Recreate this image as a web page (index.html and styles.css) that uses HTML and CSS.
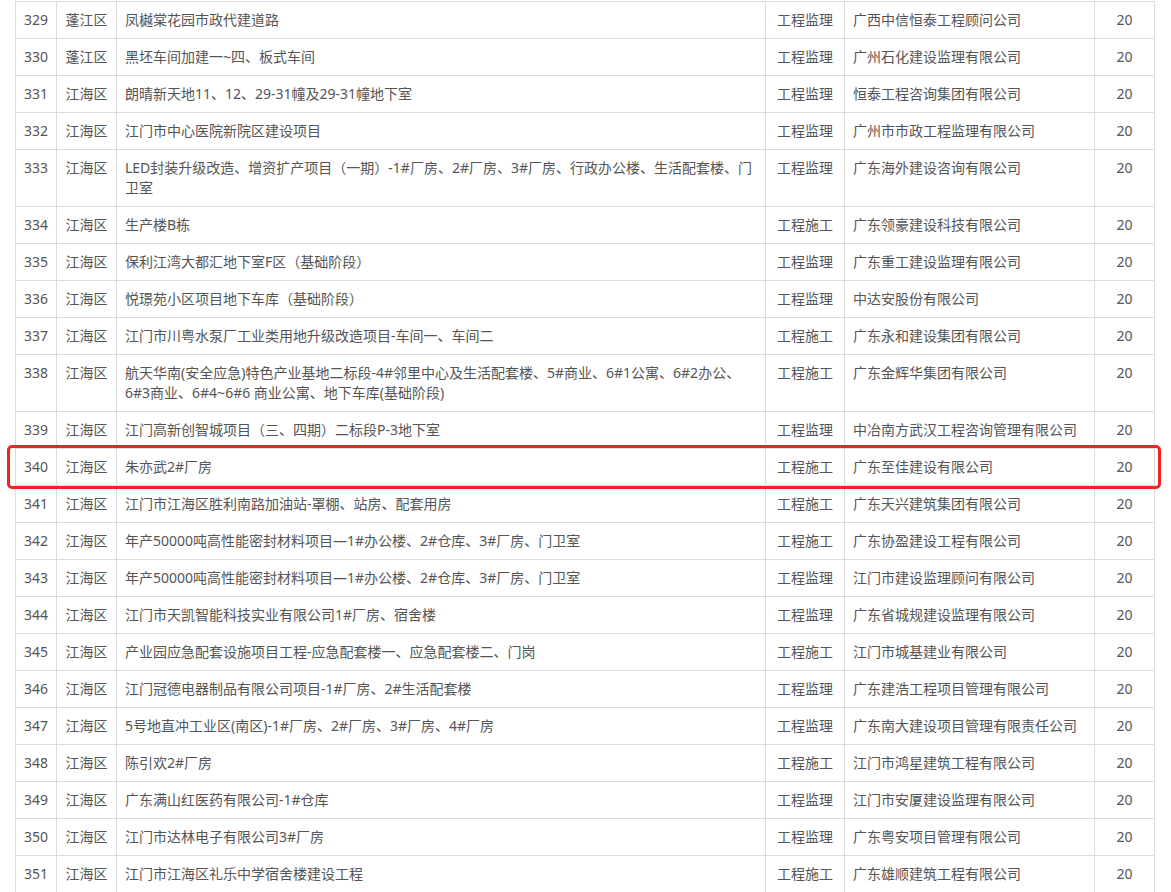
FILE: index.html
```html
<!DOCTYPE html>
<html lang="zh-CN">
<head>
<meta charset="utf-8">
<title>项目列表</title>
<link rel="stylesheet" href="styles.css">
</head>
<body>
<div class="page">
  <table class="list">
    <colgroup>
      <col class="c-no"><col class="c-area"><col class="c-name"><col class="c-type"><col class="c-corp"><col class="c-score">
    </colgroup>
    <tbody>
      <tr><td class="ctr">329</td><td class="ctr">蓬江区</td><td>凤樾棠花园市政代建道路</td><td class="ctr">工程监理</td><td>广西中信恒泰工程顾问公司</td><td class="ctr">20</td></tr>
      <tr><td class="ctr">330</td><td class="ctr">蓬江区</td><td>黑坯车间加建一~四、板式车间</td><td class="ctr">工程监理</td><td>广州石化建设监理有限公司</td><td class="ctr">20</td></tr>
      <tr><td class="ctr">331</td><td class="ctr">江海区</td><td>朗晴新天地11、12、29-31幢及29-31幢地下室</td><td class="ctr">工程监理</td><td>恒泰工程咨询集团有限公司</td><td class="ctr">20</td></tr>
      <tr><td class="ctr">332</td><td class="ctr">江海区</td><td>江门市中心医院新院区建设项目</td><td class="ctr">工程监理</td><td>广州市市政工程监理有限公司</td><td class="ctr">20</td></tr>
      <tr><td class="ctr">333</td><td class="ctr">江海区</td><td>LED封装升级改造、增资扩产项目（一期）-1#厂房、2#厂房、3#厂房、行政办公楼、生活配套楼、门卫室</td><td class="ctr">工程监理</td><td>广东海外建设咨询有限公司</td><td class="ctr">20</td></tr>
      <tr><td class="ctr">334</td><td class="ctr">江海区</td><td>生产楼B栋</td><td class="ctr">工程施工</td><td>广东领豪建设科技有限公司</td><td class="ctr">20</td></tr>
      <tr><td class="ctr">335</td><td class="ctr">江海区</td><td>保利江湾大都汇地下室F区（基础阶段）</td><td class="ctr">工程监理</td><td>广东重工建设监理有限公司</td><td class="ctr">20</td></tr>
      <tr><td class="ctr">336</td><td class="ctr">江海区</td><td>悦璟苑小区项目地下车库（基础阶段）</td><td class="ctr">工程监理</td><td>中达安股份有限公司</td><td class="ctr">20</td></tr>
      <tr><td class="ctr">337</td><td class="ctr">江海区</td><td>江门市川粤水泵厂工业类用地升级改造项目-车间一、车间二</td><td class="ctr">工程施工</td><td>广东永和建设集团有限公司</td><td class="ctr">20</td></tr>
      <tr><td class="ctr">338</td><td class="ctr">江海区</td><td>航天华南(安全应急)特色产业基地二标段-4#邻里中心及生活配套楼、5#商业、6#1公寓、6#2办公、6#3商业、6#4~6#6 商业公寓、地下车库(基础阶段)</td><td class="ctr">工程施工</td><td>广东金辉华集团有限公司</td><td class="ctr">20</td></tr>
      <tr><td class="ctr">339</td><td class="ctr">江海区</td><td>江门高新创智城项目（三、四期）二标段P-3地下室</td><td class="ctr">工程监理</td><td>中冶南方武汉工程咨询管理有限公司</td><td class="ctr">20</td></tr>
      <tr><td class="ctr">340</td><td class="ctr">江海区</td><td>朱亦武2#厂房</td><td class="ctr">工程施工</td><td>广东至佳建设有限公司</td><td class="ctr">20</td></tr>
      <tr><td class="ctr">341</td><td class="ctr">江海区</td><td>江门市江海区胜利南路加油站-罩棚、站房、配套用房</td><td class="ctr">工程施工</td><td>广东天兴建筑集团有限公司</td><td class="ctr">20</td></tr>
      <tr><td class="ctr">342</td><td class="ctr">江海区</td><td>年产50000吨高性能密封材料项目—1#办公楼、2#仓库、3#厂房、门卫室</td><td class="ctr">工程施工</td><td>广东协盈建设工程有限公司</td><td class="ctr">20</td></tr>
      <tr><td class="ctr">343</td><td class="ctr">江海区</td><td>年产50000吨高性能密封材料项目—1#办公楼、2#仓库、3#厂房、门卫室</td><td class="ctr">工程监理</td><td>江门市建设监理顾问有限公司</td><td class="ctr">20</td></tr>
      <tr><td class="ctr">344</td><td class="ctr">江海区</td><td>江门市天凯智能科技实业有限公司1#厂房、宿舍楼</td><td class="ctr">工程监理</td><td>广东省城规建设监理有限公司</td><td class="ctr">20</td></tr>
      <tr><td class="ctr">345</td><td class="ctr">江海区</td><td>产业园应急配套设施项目工程-应急配套楼一、应急配套楼二、门岗</td><td class="ctr">工程施工</td><td>江门市城基建业有限公司</td><td class="ctr">20</td></tr>
      <tr><td class="ctr">346</td><td class="ctr">江海区</td><td>江门冠德电器制品有限公司项目-1#厂房、2#生活配套楼</td><td class="ctr">工程监理</td><td>广东建浩工程项目管理有限公司</td><td class="ctr">20</td></tr>
      <tr><td class="ctr">347</td><td class="ctr">江海区</td><td>5号地直冲工业区(南区)-1#厂房、2#厂房、3#厂房、4#厂房</td><td class="ctr">工程监理</td><td>广东南大建设项目管理有限责任公司</td><td class="ctr">20</td></tr>
      <tr><td class="ctr">348</td><td class="ctr">江海区</td><td>陈引欢2#厂房</td><td class="ctr">工程施工</td><td>江门市鸿星建筑工程有限公司</td><td class="ctr">20</td></tr>
      <tr><td class="ctr">349</td><td class="ctr">江海区</td><td>广东满山红医药有限公司-1#仓库</td><td class="ctr">工程监理</td><td>江门市安厦建设监理有限公司</td><td class="ctr">20</td></tr>
      <tr><td class="ctr">350</td><td class="ctr">江海区</td><td>江门市达林电子有限公司3#厂房</td><td class="ctr">工程监理</td><td>广东粤安项目管理有限公司</td><td class="ctr">20</td></tr>
      <tr><td class="ctr">351</td><td class="ctr">江海区</td><td>江门市江海区礼乐中学宿舍楼建设工程</td><td class="ctr">工程施工</td><td>广东雄顺建筑工程有限公司</td><td class="ctr">20</td></tr>
    </tbody>
  </table>
  <div class="mark" aria-hidden="true"></div>
</div>
</body>
</html>
```

FILE: styles.css
```css
html, body {
  margin: 0;
  padding: 0;
  background: #fff;
}

body {
  font-family: "Noto Sans", "Noto Sans CJK SC", sans-serif;
  font-size: 14px;
  color: #555;
}

.page {
  position: relative;
  padding: 1px 0 0 15px;
}

.list {
  width: 1140px;
  table-layout: fixed;
  border-collapse: collapse;
}

.c-no { width: 41px; }
.c-area { width: 60px; }
.c-name { width: 649px; }
.c-type { width: 79px; }
.c-corp { width: 250px; }
.c-score { width: 60px; }

.list td {
  border: 1px solid #dcdcdc;
  padding: 8px 8px;
  line-height: 20px;
  vertical-align: top;
  text-align: left;
}

.list td.ctr {
  text-align: center;
  padding-left: 2px;
  padding-right: 2px;
}

.mark {
  position: absolute;
  left: 7px;
  top: 445px;
  width: 1148px;
  height: 38px;
  border: 3px solid #f02424;
  border-radius: 5px;
  pointer-events: none;
}
```
